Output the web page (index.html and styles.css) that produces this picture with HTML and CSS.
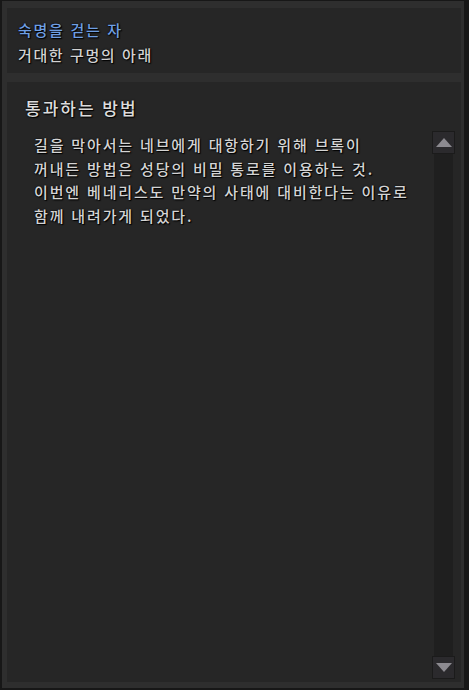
FILE: index.html
```html
<!DOCTYPE html>
<html lang="ko">
<head>
  <meta charset="UTF-8" />
  <meta name="viewport" content="width=device-width, initial-scale=1.0"/>
  <title>숙명을 걷는 자</title>
  <link rel="stylesheet" href="styles.css">
</head>
<body>
  <div class="window">
    <div class="quest-header">
      <div class="quest-name">숙명을 걷는 자</div>
      <div class="quest-area">거대한 구멍의 아래</div>
    </div>

    <div class="quest-panel">
      <div class="step-title">통과하는 방법</div>
      <div class="step-body">
        <div class="step-text">
          길을 막아서는 네브에게 대항하기 위해 브록이<br>
          꺼내든 방법은 성당의 비밀 통로를 이용하는 것.<br>
          이번엔 베네리스도 만약의 사태에 대비한다는 이유로<br>
          함께 내려가게 되었다.
        </div>
        <div class="scrollbar">
          <div class="scroll-btn"><span class="arrow-up"></span></div>
          <div class="scroll-track"></div>
          <div class="scroll-btn"><span class="arrow-down"></span></div>
        </div>
      </div>
    </div>
  </div>
</body>
</html>
```

FILE: styles.css
```css
body {
  margin: 0;
  background: #161616;
  font-family: "Noto Sans CJK KR", "Noto Sans", sans-serif;
}

.window {
  width: 469px;
  height: 690px;
  box-sizing: border-box;
  background: #2e2e2e;
  border: 2px solid #171717;
  border-top-width: 1px;
  border-right-width: 5px;
  padding: 7px 3px 6px 5px;
  display: flex;
  flex-direction: column;
  gap: 9px;
}

.quest-header {
  background: #262626;
  height: 65px;
  box-sizing: border-box;
  padding: 9px 11px 0;
  text-shadow: 0 0 2px #000, 1px 1px 1px #000;
}

.quest-name {
  color: #6f9fe3;
  font-size: 15px;
  font-weight: 500;
  line-height: 25px;
  letter-spacing: 1.7px;
}

.quest-area {
  color: #d2d2d2;
  font-size: 15px;
  font-weight: 500;
  line-height: 25px;
  letter-spacing: 1.6px;
}

.quest-panel {
  flex: 1;
  background: #262626;
  padding: 14px 6px 3px 18px;
  display: flex;
  flex-direction: column;
  text-shadow: 0 0 2px #000, 1px 1px 1px #000;
}

.step-title {
  color: #dcdcdc;
  font-size: 17px;
  font-weight: 500;
  line-height: 24px;
  letter-spacing: 2px;
}

.step-body {
  flex: 1;
  display: flex;
  margin-top: 11px;
}

.step-text {
  flex: 1;
  color: #d4d4d4;
  font-size: 15px;
  font-weight: 500;
  line-height: 23.5px;
  letter-spacing: 1.85px;
  padding: 2px 0 0 9px;
}

.scrollbar {
  width: 23px;
  display: flex;
  flex-direction: column;
}

.scroll-btn {
  height: 23px;
  box-sizing: border-box;
  background: #2b2a2d;
  border: 1px solid #1b1b1b;
  display: flex;
  align-items: center;
  justify-content: center;
}

.scroll-track {
  flex: 1;
  background: #1f1f1f;
  margin: 0 2px;
}

.arrow-up {
  width: 0;
  height: 0;
  border-left: 8px solid transparent;
  border-right: 8px solid transparent;
  border-bottom: 9px solid #8c8a90;
}

.arrow-down {
  width: 0;
  height: 0;
  border-left: 8px solid transparent;
  border-right: 8px solid transparent;
  border-top: 9px solid #8c8a90;
}
```
